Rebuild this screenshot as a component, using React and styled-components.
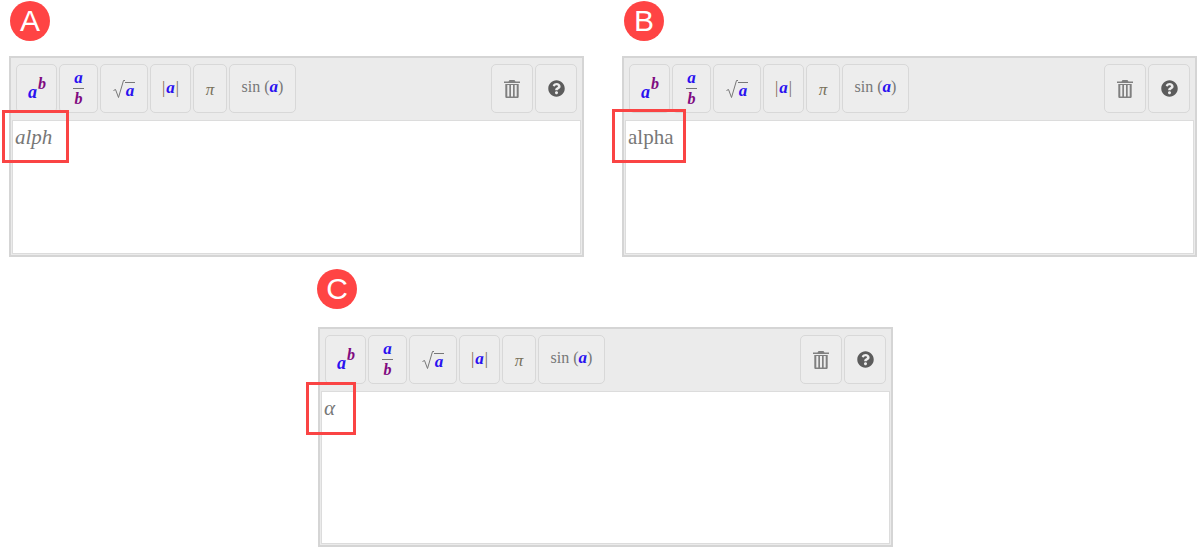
import React from "react";
import styled, { createGlobalStyle } from "styled-components";
import { FaQuestionCircle } from "react-icons/fa";

const GlobalStyle = createGlobalStyle`
  html, body {
    margin: 0;
    padding: 0;
    background: #fff;
    overflow: hidden;
    font-family: "Liberation Serif", serif;
  }
`;

const Page = styled.div`
  width: 1198px;
  height: 547px;
  overflow: hidden;
  display: flex;
  flex-direction: column;
  padding-top: 1px;
  box-sizing: border-box;
`;

const TopRow = styled.div`
  display: flex;
  gap: 38px;
  padding-left: 9px;
`;

const BottomRow = styled.div`
  display: flex;
  padding: 12px 0 0 318px;
`;

const Panel = styled.div`
  display: flex;
  flex-direction: column;
  width: 575px;
`;

const Badge = styled.div`
  width: 40px;
  height: 40px;
  border-radius: 50%;
  background: #ff4444;
  color: #fff;
  font: 30px/40px "Liberation Sans", Arial, sans-serif;
  text-align: center;
  margin-left: ${(p) => p.$left}px;
  margin-bottom: ${(p) => p.$gap}px;
`;

const Editor = styled.div`
  position: relative;
  box-sizing: border-box;
  height: ${(p) => p.$height}px;
  display: flex;
  flex-direction: column;
  border: 2px solid #d5d5d5;
  background: #ebebeb;
  padding: 0 1px 1px;
`;

const Toolbar = styled.div`
  display: flex;
  gap: 2px;
  height: 62px;
  padding: 6px 4px 0 4px;
  box-sizing: border-box;
  flex: none;
`;

const Spacer = styled.div`
  flex: 1;
`;

const ToolButton = styled.div`
  box-sizing: border-box;
  width: ${(p) => p.$width}px;
  height: 49px;
  border: 1px solid #d8d8d8;
  border-radius: 5px;
  background: #ededed;
  display: flex;
  align-items: center;
  justify-content: center;
  color: #777;
  font-family: "Liberation Serif", serif;
`;

const VarA = styled.span`
  color: #2a12f0;
  font-style: italic;
  font-weight: 700;
  font-size: 17px;
`;

const VarB = styled.span`
  color: #800a80;
  font-style: italic;
  font-weight: 700;
  font-size: 16px;
`;

const Power = styled.span`
  display: flex;
  align-items: baseline;
  padding-top: 8px;

  ${VarA} {
    font-size: 18px;
  }

  ${VarB} {
    position: relative;
    top: -9px;
    left: 1px;
  }
`;

const Fraction = styled.span`
  display: flex;
  flex-direction: column;
  align-items: center;
  line-height: 15px;

  ${VarA} {
    border-bottom: 1px solid #777;
    padding: 0 1px 3px;
    line-height: 14px;
  }

  ${VarB} {
    padding-top: 2px;
  }
`;

const Root = styled.span`
  display: flex;
  align-items: flex-end;
  padding-top: 1px;

  ${VarA} {
    border-top: 1px solid #777;
    line-height: 15px;
    padding: 0 1px;
  }
`;

const Bars = styled.span`
  font-size: 16px;
  color: #776a50;
  padding-bottom: 1px;

  ${VarA} {
    padding: 0 1px;
  }
`;

const Pi = styled.span`
  font-style: italic;
  font-size: 17px;
  color: #77705a;
  padding-top: 3px;
`;

const Func = styled.span`
  font-size: 16px;
  color: #777;
  padding-bottom: 3px;
`;

const Content = styled.div`
  flex: 1;
  background: #fff;
  border: 1px solid #dcdcdc;
  padding: 5px 2px;
  font-size: 21px;
  line-height: 23px;
  color: #777;
  font-style: ${(p) => (p.$italic ? "italic" : "normal")};
`;

const Marker = styled.div`
  position: absolute;
  box-sizing: border-box;
  border: 3px solid #fa4444;
  left: ${(p) => p.$left}px;
  top: ${(p) => p.$top}px;
  width: ${(p) => p.$width}px;
  height: ${(p) => p.$h}px;
`;

function RadicalSign() {
  return (
    <svg width="12" height="18" viewBox="0 0 12 18" fill="none">
      <path d="M0.5 10.500 L2.500 9.500 L5.500 17.500 L10.500 0.500 L12 0.500" stroke="#777" strokeWidth="1" />
    </svg>
  );
}

function TrashIcon() {
  return (
    <svg width="16" height="18" viewBox="0 0 16 18">
      <path
        fill="#808080"
        d="M5.500 0h5l1 1.600H16V3H0V1.600h4.500zM1.300 4h13.400v12.400c0 .9-.6 1.600-1.500 1.600H2.800c-.9 0-1.500-.7-1.500-1.600zM3.300 5v11.500h2V5zM7 5v11.500h2V5zM10.700 5v11.500h2V5z"
      />
    </svg>
  );
}

function MathEditor({ height, text, italic, marker }) {
  return (
    <Editor $height={height}>
      <Toolbar>
        <ToolButton $width={41}>
          <Power>
            <VarA>a</VarA>
            <VarB>b</VarB>
          </Power>
        </ToolButton>
        <ToolButton $width={39}>
          <Fraction>
            <VarA>a</VarA>
            <VarB>b</VarB>
          </Fraction>
        </ToolButton>
        <ToolButton $width={48}>
          <Root>
            <RadicalSign />
            <VarA>a</VarA>
          </Root>
        </ToolButton>
        <ToolButton $width={41}>
          <Bars>
            |<VarA>a</VarA>|
          </Bars>
        </ToolButton>
        <ToolButton $width={34}>
          <Pi>π</Pi>
        </ToolButton>
        <ToolButton $width={67}>
          <Func>
            sin (<VarA>a</VarA>)
          </Func>
        </ToolButton>
        <Spacer />
        <ToolButton $width={42}>
          <TrashIcon />
        </ToolButton>
        <ToolButton $width={42}>
          <FaQuestionCircle size={17} color="#5c5c5c" />
        </ToolButton>
      </Toolbar>
      <Content $italic={italic}>{text}</Content>
      <Marker $left={marker.left} $top={marker.top} $width={marker.width} $h={marker.height} />
    </Editor>
  );
}

export default function App() {
  return (
    <Page>
      <GlobalStyle />
      <TopRow>
        <Panel>
          <Badge $left={1} $gap={15}>A</Badge>
          <MathEditor
            height={201}
            text="alph"
            italic
            marker={{ left: -9, top: 52, width: 67, height: 53 }}
          />
        </Panel>
        <Panel>
          <Badge $left={2} $gap={15}>B</Badge>
          <MathEditor
            height={201}
            text="alpha"
            marker={{ left: -12, top: 51, width: 74, height: 54 }}
          />
        </Panel>
      </TopRow>
      <BottomRow>
        <Panel>
          <Badge $left={-1} $gap={18}>C</Badge>
          <MathEditor
            height={220}
            text="α"
            italic
            marker={{ left: -14, top: 53, width: 50, height: 53 }}
          />
        </Panel>
      </BottomRow>
    </Page>
  );
}
